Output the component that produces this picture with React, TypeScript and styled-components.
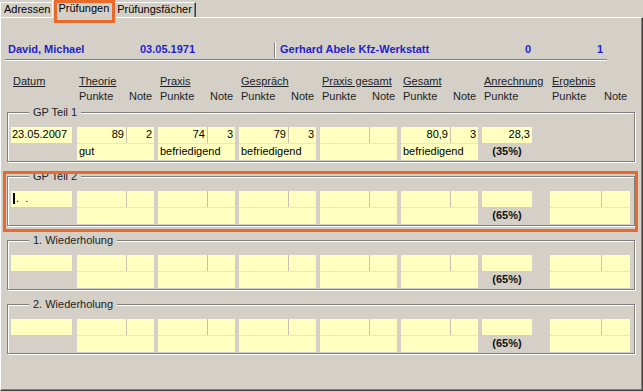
import styled, { createGlobalStyle, css } from 'styled-components';

const FACE = '#d4d0c8';
const FIELD = '#ffffc0';
const MARK = '#ea6a2c';

const GlobalStyle = createGlobalStyle`
  html, body { margin: 0; padding: 0; background: ${FACE}; }
  body {
    font-family: "Liberation Sans", Arial, sans-serif;
    font-size: 11px;
    color: #000;
  }
  * { box-sizing: border-box; }
`;

const markFrame = css`
  &::after {
    content: '';
    position: absolute;
    border: 3px solid ${MARK};
    pointer-events: none;
    z-index: 2;
  }
`;

const Window = styled.div`
  width: 643px;
  height: 392px;
  overflow: hidden;
  background: ${FACE};
`;

const TabStrip = styled.div`
  display: flex;
  align-items: flex-start;
  height: 17px;
`;

const Tab = styled.div<{ $active?: boolean; $marked?: boolean }>`
  position: relative;
  height: 15px;
  margin-top: 2px;
  padding: 0 3px;
  line-height: 13px;
  white-space: nowrap;
  background: ${FACE};
  border: 1px solid #fff;
  border-bottom: 0;
  border-right-color: #404040;
  box-shadow: inset -1px 0 0 #808080;

  ${({ $active }) =>
    $active &&
    css`
      z-index: 1;
      height: 18px;
      margin: 0 -2px;
      padding: 1px 5px 0;
    `}

  ${({ $marked }) =>
    $marked &&
    css`
      ${markFrame}
      &::after {
        top: -1px;
        left: 1px;
        right: -1px;
        bottom: -5px;
      }
    `}
`;

const Panel = styled.div`
  height: 374px;
  padding-top: 24px;
  border: 1px solid #fff;
  border-right-color: #404040;
  border-bottom-color: #404040;
  box-shadow: inset -1px -1px 0 #808080;
`;

const InfoBar = styled.div`
  display: grid;
  grid-template-columns: 135px 134px 2px 245px 14px 58px 14px;
  grid-template-rows: 14px;
  width: 602px;
  margin-left: 4px;
  padding-bottom: 3px;
  border-bottom: 1px solid #808080;
  box-shadow: 0 1px 0 #fff;
  color: #1f1fcc;
  font-weight: bold;
  line-height: 14px;
  white-space: nowrap;
`;

const InfoText = styled.span<{ $indent?: number; $center?: boolean }>`
  padding-left: ${({ $indent = 0 }) => $indent}px;
  text-align: ${({ $center }) => ($center ? 'center' : 'left')};
`;

const InfoDivider = styled.span`
  height: 15px;
  margin-top: 1px;
  border-left: 1px solid #808080;
  border-right: 1px solid #fff;
`;

const columns = css`
  display: grid;
  grid-template-columns: 62px repeat(5, 77px) 64px 80px;
  column-gap: 4px;
`;

const HeadGrid = styled.div`
  ${columns}
  grid-template-rows: 14px 14px;
  row-gap: 1px;
  margin: 14px 0 0 10px;
  line-height: 14px;
  color: #222;
`;

const HeadTitle = styled.span`
  padding-left: 2px;
  text-decoration: underline;
  white-space: nowrap;
`;

const HeadPair = styled.div<{ $wide?: boolean }>`
  display: grid;
  grid-template-columns: ${({ $wide }) => ($wide ? '52px 28px' : '50px 27px')};
`;

const HeadSub = styled.span`
  padding-left: 2px;
`;

const GroupStack = styled.div`
  display: flex;
  flex-direction: column;
  gap: 8px;
  margin-top: 3px;
`;

const Marked = styled.div<{ $on?: boolean }>`
  position: relative;
  ${({ $on }) =>
    $on &&
    css`
      ${markFrame}
      &::after {
        top: 1px;
        left: 2px;
        right: 4px;
        bottom: -6px;
      }
    `}
`;

const Group = styled.fieldset`
  width: 628px;
  min-width: 0;
  margin: 0 0 0 6px;
  padding: 8px 0 1px 3px;
  border: 1px solid #808080;
  box-shadow: 1px 1px 0 #fff, inset 1px 1px 0 #fff;
`;

const GroupTitle = styled.legend`
  margin-left: 18px;
  padding: 0 4px;
  line-height: 13px;
  background: ${FACE};
  color: #222;
`;

const Row = styled.div`
  ${columns}
  grid-template-rows: 33px;
  align-items: start;
`;

const Field = styled.div<{ $align?: 'left' | 'right'; $width?: number }>`
  width: ${({ $width }) => ($width ? `${$width}px` : 'auto')};
  height: 16px;
  padding: 0 2px 0 1px;
  background: ${FIELD};
  line-height: 15px;
  text-align: ${({ $align = 'left' }) => $align};
  white-space: pre;
  overflow: hidden;
`;

const Pair = styled.div<{ $wide?: boolean }>`
  display: grid;
  grid-template-columns: ${({ $wide }) => ($wide ? '51px 29px' : '49px 28px')};
  grid-template-rows: 16px 16px;
  row-gap: 1px;
  background: #e8e5d2;
`;

const Cell = styled.div<{ $align?: 'left' | 'right'; $span?: boolean; $divided?: boolean }>`
  padding: 0 2px;
  background: ${FIELD};
  line-height: 15px;
  text-align: ${({ $align = 'left' }) => $align};
  white-space: nowrap;
  overflow: hidden;
  ${({ $span }) => $span && 'grid-column: span 2;'}
  ${({ $divided }) => $divided && 'border-left: 1px solid #c6c2ab;'}
`;

const Credit = styled.div`
  display: flex;
  flex-direction: column;
  width: 50px;
`;

const Share = styled.div`
  margin-top: 1px;
  line-height: 15px;
  font-weight: bold;
  text-align: center;
  color: #111;
`;

const Caret = styled.span`
  display: inline-block;
  width: 2px;
  height: 11px;
  margin: 0 1px 0 1px;
  background: #000;
  vertical-align: -2px;
`;

type Score = { points?: string; grade?: string; text?: string };

type Exam = {
  title: string;
  date?: string;
  caret?: boolean;
  scores: Score[];
  credit?: string;
  share: string;
  result?: boolean;
  marked?: boolean;
};

const empty: Score[] = [{}, {}, {}, {}, {}];

const exams: Exam[] = [
  {
    title: 'GP Teil 1',
    date: '23.05.2007',
    scores: [
      { points: '89', grade: '2', text: 'gut' },
      { points: '74', grade: '3', text: 'befriedigend' },
      { points: '79', grade: '3', text: 'befriedigend' },
      {},
      { points: '80,9', grade: '3', text: 'befriedigend' },
    ],
    credit: '28,3',
    share: '(35%)',
  },
  { title: 'GP Teil 2', caret: true, scores: empty, share: '(65%)', result: true, marked: true },
  { title: '1. Wiederholung', scores: empty, share: '(65%)', result: true },
  { title: '2. Wiederholung', scores: empty, share: '(65%)', result: true },
];

const headings = ['Theorie', 'Praxis', 'Gespräch', 'Praxis gesamt', 'Gesamt'];

const ScoreBlock = ({ score, wide }: { score: Score; wide?: boolean }) => (
  <Pair $wide={wide}>
    <Cell $align="right">{score.points}</Cell>
    <Cell $align="right" $divided>
      {score.grade}
    </Cell>
    <Cell $span>{score.text}</Cell>
  </Pair>
);

const ExamGroup = ({ exam }: { exam: Exam }) => (
  <Marked $on={exam.marked}>
    <Group>
      <GroupTitle>{exam.title}</GroupTitle>
      <Row>
        <Field $width={61}>
          {exam.caret ? (
            <>
              <Caret />
              {'.  .'}
            </>
          ) : (
            exam.date
          )}
        </Field>
        {exam.scores.map((score, i) => (
          <ScoreBlock key={i} score={score} />
        ))}
        <Credit>
          <Field $align="right">{exam.credit}</Field>
          <Share>{exam.share}</Share>
        </Credit>
        {exam.result && <ScoreBlock score={{}} wide />}
      </Row>
    </Group>
  </Marked>
);

const App = () => (
  <>
    <GlobalStyle />
    <Window>
      <TabStrip>
        <Tab>Adressen</Tab>
        <Tab $active $marked>
          Prüfungen
        </Tab>
        <Tab>Prüfungsfächer</Tab>
      </TabStrip>
      <Panel>
        <InfoBar>
          <InfoText $indent={3}>David, Michael</InfoText>
          <InfoText>03.05.1971</InfoText>
          <InfoDivider />
          <InfoText $indent={4}>Gerhard Abele Kfz-Werkstatt</InfoText>
          <InfoText $center>0</InfoText>
          <span />
          <InfoText $center>1</InfoText>
        </InfoBar>

        <HeadGrid>
          <HeadTitle>Datum</HeadTitle>
          {headings.map((h) => (
            <HeadTitle key={h}>{h}</HeadTitle>
          ))}
          <HeadTitle>Anrechnung</HeadTitle>
          <HeadTitle>Ergebnis</HeadTitle>

          <span />
          {headings.map((h) => (
            <HeadPair key={h}>
              <HeadSub>Punkte</HeadSub>
              <HeadSub>Note</HeadSub>
            </HeadPair>
          ))}
          <HeadSub>Punkte</HeadSub>
          <HeadPair $wide>
            <HeadSub>Punkte</HeadSub>
            <HeadSub>Note</HeadSub>
          </HeadPair>
        </HeadGrid>

        <GroupStack>
          {exams.map((exam) => (
            <ExamGroup key={exam.title} exam={exam} />
          ))}
        </GroupStack>
      </Panel>
    </Window>
  </>
);

export default App;
